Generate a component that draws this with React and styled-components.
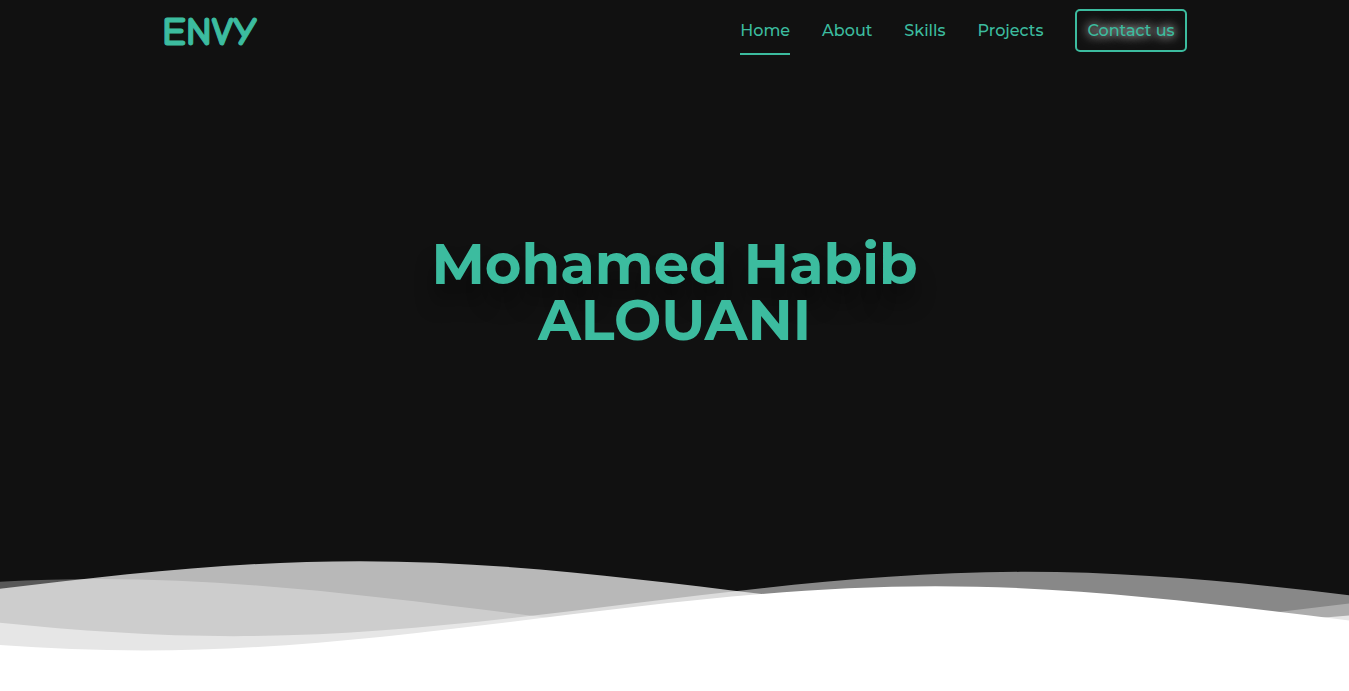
import React from "react";
import styled, { createGlobalStyle } from "styled-components";

const GlobalStyle = createGlobalStyle`
  *, *::before, *::after { box-sizing: border-box; }
  body {
    margin: 0;
    background: #ffffff;
    font-family: Montserrat, Inter, "Liberation Sans", sans-serif;
    color: #3cbc9f;
  }
`;

const Page = styled.div`
  min-height: 100vh;
  display: flex;
  flex-direction: column;
`;

const Hero = styled.div`
  flex: 1;
  display: flex;
  flex-direction: column;
  background: #111111;
`;

const Header = styled.header`
  width: 100%;
  max-width: 1024px;
  min-height: 61px;
  margin: 0 auto;
  display: flex;
  align-items: center;
  justify-content: space-between;
`;

const Brand = styled.a`
  display: flex;
  text-decoration: none;
`;

const Logo = styled.svg`
  display: block;
  width: 120px;
  height: 60px;

  text {
    font-family: "Comic Neue", "Comic Sans MS", Lato, cursive;
    font-size: 40px;
    font-weight: 700;
    fill: #3cbc9f;
    stroke: #3cbc9f;
    stroke-width: 1px;
    stroke-linejoin: round;
  }
`;

const Nav = styled.nav`
  display: flex;
  align-items: center;
  gap: 32px;
  font-size: 16px;
  font-weight: 500;
  line-height: 19px;
`;

const NavLink = styled.a`
  padding: 13px 0;
  border: solid transparent;
  border-width: 2px 0;
  border-bottom-color: ${({ $active }) => ($active ? "#3cbc9f" : "transparent")};
  color: inherit;
  text-decoration: none;
`;

const ContactButton = styled.button`
  padding: 10px;
  border: 2px solid #3cbc9f;
  border-radius: 5px;
  background: transparent;
  color: inherit;
  font: inherit;
  text-shadow: 0 0 10px #ffffff, 0 0 16px rgba(255, 255, 255, 0.5);
  cursor: pointer;
`;

const Intro = styled.main`
  flex: 1;
  display: flex;
  align-items: center;
  justify-content: center;
  padding: 16px 16px 48px;
`;

const Title = styled.h1`
  margin: 0;
  font-size: 56px;
  font-weight: 700;
  line-height: 56px;
  text-align: center;

  &::first-line {
    text-shadow: 0 20px 20px rgba(0, 0, 0, 0.4);
  }
`;

const Waves = styled.svg`
  display: block;
  width: 100%;
  height: 100px;
`;

const Footing = styled.div`
  height: 37px;
  background: #ffffff;
`;

const WAVES = [
  { x: -64, y: 0, opacity: 0.7 },
  { x: 10, y: 3, opacity: 0.5 },
  { x: -93, y: 5, opacity: 0.3 },
  { x: 0, y: 7, opacity: 1 },
];

const LINKS = ["Home", "About", "Skills", "Projects"];

export default function App() {
  return (
    <Page>
      <GlobalStyle />
      <Hero>
        <Header>
          <Brand href="#home">
            <Logo viewBox="0 0 120 60" role="img" aria-label="ENVY">
              <text x="-1" y="44">ENVY</text>
            </Logo>
          </Brand>
          <Nav aria-label="Main">
            {LINKS.map((name, i) => (
              <NavLink key={name} href={`#${name.toLowerCase()}`} $active={i === 0}>
                {name}
              </NavLink>
            ))}
            <ContactButton type="button">Contact us</ContactButton>
          </Nav>
        </Header>
        <Intro>
          <Title>
            Mohamed Habib
            <br />
            ALOUANI
          </Title>
        </Intro>
        <Waves viewBox="0 24 150 28" preserveAspectRatio="none" aria-hidden="true">
          <defs>
            <path
              id="wave"
              d="M-160 44c30 0 58-18 88-18s58 18 88 18 58-18 88-18 58 18 88 18 58-18 88-18 58 18 88 18v44h-528z"
            />
          </defs>
          {WAVES.map((w) => (
            <use key={w.y} href="#wave" x={w.x} y={w.y} fill="#ffffff" fillOpacity={w.opacity} />
          ))}
        </Waves>
      </Hero>
      <Footing />
    </Page>
  );
}
